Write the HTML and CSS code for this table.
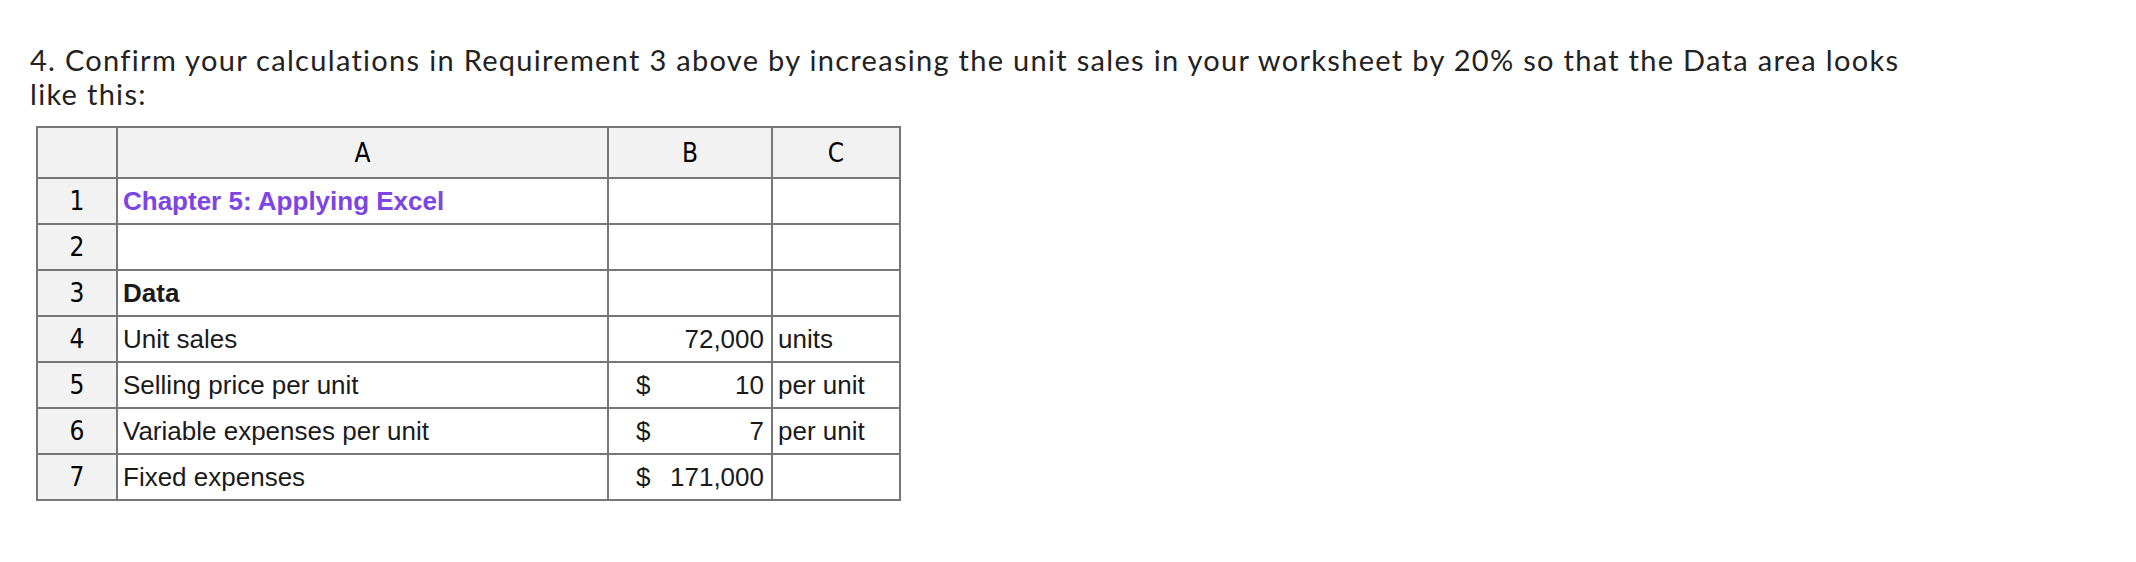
FILE: index.html
```html
<!DOCTYPE html>
<html lang="en">
<head>
<meta charset="utf-8">
<title>Applying Excel</title>
<link rel="stylesheet" href="styles.css">
</head>
<body>
<div class="page">
  <p class="question">4. Confirm your calculations in Requirement 3 above by increasing the unit sales in your worksheet by 20% so that the Data area looks like this:</p>
  <table class="sheet">
    <colgroup>
      <col class="c-row">
      <col class="c-a">
      <col class="c-b">
      <col class="c-c">
    </colgroup>
    <thead>
      <tr class="head">
        <th class="corner"></th>
        <th>A</th>
        <th>B</th>
        <th>C</th>
      </tr>
    </thead>
    <tbody>
      <tr>
        <th class="rn">1</th>
        <td class="title">Chapter 5: Applying Excel</td>
        <td></td>
        <td></td>
      </tr>
      <tr>
        <th class="rn">2</th>
        <td></td>
        <td></td>
        <td></td>
      </tr>
      <tr>
        <th class="rn">3</th>
        <td class="bold">Data</td>
        <td></td>
        <td></td>
      </tr>
      <tr>
        <th class="rn">4</th>
        <td>Unit sales</td>
        <td class="num"><span class="amt">72,000</span></td>
        <td>units</td>
      </tr>
      <tr>
        <th class="rn">5</th>
        <td>Selling price per unit</td>
        <td class="num"><span class="cur">$</span><span class="amt">10</span></td>
        <td>per unit</td>
      </tr>
      <tr>
        <th class="rn">6</th>
        <td>Variable expenses per unit</td>
        <td class="num"><span class="cur">$</span><span class="amt">7</span></td>
        <td>per unit</td>
      </tr>
      <tr>
        <th class="rn">7</th>
        <td>Fixed expenses</td>
        <td class="num"><span class="cur">$</span><span class="amt">171,000</span></td>
        <td></td>
      </tr>
    </tbody>
  </table>
</div>
</body>
</html>
```

FILE: styles.css
```css
html, body {
  margin: 0;
  padding: 0;
  background: #ffffff;
}

.page {
  padding: 43px 0 0 30px;
}

.question {
  margin: 0;
  width: 1915px;
  font-family: Lato, "Open Sans", sans-serif;
  font-size: 29px;
  letter-spacing: 1.3px;
  line-height: 34px;
  color: #222222;
}

.sheet {
  margin: 15px 0 0 6px;
  border-collapse: collapse;
  table-layout: fixed;
  width: 864px;
  font-family: "Liberation Sans", Arial, sans-serif;
  font-size: 26px;
  color: #1a1a1a;
}

.c-row { width: 80px; }
.c-a { width: 491px; }
.c-b { width: 164px; }
.c-c { width: 128px; }

.sheet th,
.sheet td {
  border: 2px solid #777777;
  padding: 0 5px;
  height: 44px;
  vertical-align: middle;
  white-space: nowrap;
}

.sheet .head th {
  height: 49px;
  background: #f2f2f2;
  font-family: "DejaVu Sans Condensed", "DejaVu Sans", Verdana, sans-serif;
  font-weight: normal;
  font-size: 26px;
  color: #000000;
  text-align: center;
}

.sheet .rn {
  background: #f2f2f2;
  font-family: "DejaVu Sans Condensed", "DejaVu Sans", Verdana, sans-serif;
  font-weight: normal;
  font-size: 26px;
  color: #000000;
  text-align: center;
}

.sheet td.title {
  color: #7d45e6;
  font-weight: bold;
}

.sheet td.bold {
  font-weight: bold;
}

.sheet td.num {
  padding: 0 7px 0 27px;
}

.num {
  text-align: right;
}

.num .cur {
  float: left;
}

.num .amt {
  display: inline-block;
}
```
